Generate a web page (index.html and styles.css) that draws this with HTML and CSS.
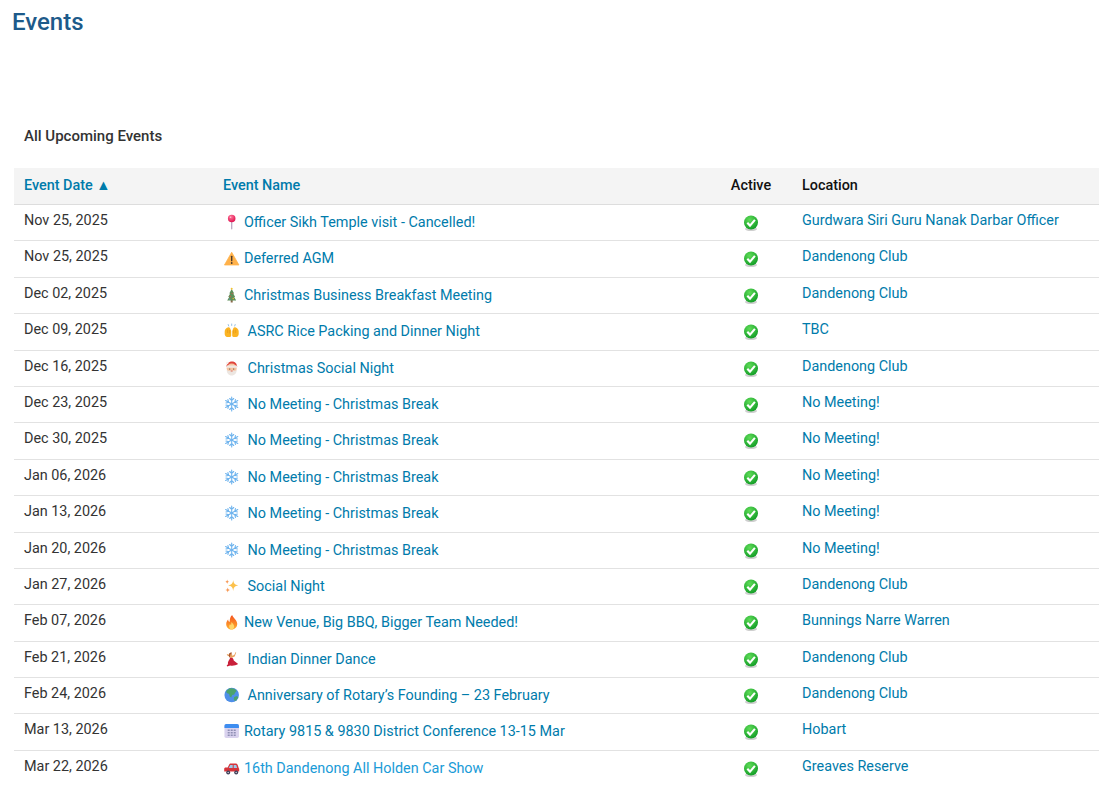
FILE: index.html
```html
<!DOCTYPE html>
<html lang="en">
<head>
<meta charset="utf-8">
<title>Events</title>
<link rel="stylesheet" href="styles.css">
</head>
<body>
<svg class="sprite" width="0" height="0" aria-hidden="true">
  <defs>
    <radialGradient id="g-check" cx="40%" cy="30%" r="75%"><stop offset="0" stop-color="#5fdc58"/><stop offset="1" stop-color="#0f9a24"/></radialGradient>
    <radialGradient id="g-pin" cx="40%" cy="30%" r="70%"><stop offset="0" stop-color="#ff7a9c"/><stop offset="1" stop-color="#e0124f"/></radialGradient>
    <linearGradient id="g-fire" x1="0" y1="1" x2="0" y2="0"><stop offset="0" stop-color="#ffb02e"/><stop offset="1" stop-color="#f4511e"/></linearGradient>
    <symbol id="e-check" viewBox="0 0 16 16"><ellipse cx="8" cy="14" rx="6" ry="2" fill="#cfcfcf"/><circle cx="8" cy="7.5" r="7" fill="url(#g-check)"/><path d="M4.3 7.8 7 10.6 11.9 4.9" fill="none" stroke="#fff" stroke-width="2.1"/></symbol>
    <symbol id="e-pin" viewBox="0 0 32 32"><rect x="14.7" y="14" width="2.6" height="17" rx="1.3" fill="#b9a9c4"/><circle cx="16" cy="9" r="7.5" fill="url(#g-pin)"/><circle cx="13.5" cy="6.5" r="1.6" fill="#ffc2d1"/></symbol>
    <symbol id="e-warn" viewBox="0 0 32 32"><path d="M16 4.5 30.5 30H1.500z" fill="#ffb14a" stroke="#ffb14a" stroke-width="1.500" stroke-linejoin="round"/><rect x="14.6" y="11.500" width="2.8" height="11" rx="1.200" fill="#4a3a2c"/><circle cx="16" cy="26" r="1.800" fill="#4a3a2c"/></symbol>
    <symbol id="e-tree" viewBox="0 0 32 32"><rect x="14" y="26" width="4" height="5" fill="#8a6a4c"/><path d="M16 4 21 13h-2l4 7h-2l4 7H7l4-7H9l4-7h-2z" fill="#5f8f5a"/><circle cx="16" cy="3.500" r="2" fill="#f2c230"/><circle cx="13" cy="19" r="1.300" fill="#e0524a"/><circle cx="19" cy="23" r="1.300" fill="#f2c230"/><circle cx="17" cy="13" r="1.200" fill="#e0524a"/><circle cx="12" cy="24" r="1.200" fill="#5aa6e0"/></symbol>
    <symbol id="e-hands" viewBox="0 0 32 32"><path d="M2 17c0-4 3-7 6-8 2-1 4 0 5 2l2 5v9c0 2-2 3-4 3H7c-3 0-5-3-5-6z" fill="#fbb423"/><path d="M30 17c0-4-3-7-6-8-2-1-4 0-5 2l-2 5v9c0 2 2 3 4 3h4c3 0 5-3 5-6z" fill="#fbb423"/><path d="M8 13v7M12 14v7M24 13v7M20 14v7" stroke="#dd8a10" stroke-width="1"/><path d="M9 3l1 3M16 2v3M23 3l-1 3" stroke="#7fb2de" stroke-width="1.600" stroke-linecap="round"/></symbol>
    <symbol id="e-santa" viewBox="0 0 32 32"><path d="M5 14C6 5 13 2 19 3c5 1 8 6 8 11z" fill="#e0433a"/><circle cx="7" cy="6" r="2.500" fill="#f4f0ec"/><circle cx="16" cy="17" r="10" fill="#f6c4a0"/><rect x="5" y="11" width="22" height="4.500" rx="2.200" fill="#efe9e4"/><path d="M6 20c3 2 6 1 10 1s7 1 10-1c0 6-4 11-10 11S6 26 6 20z" fill="#ece6e1"/><circle cx="12" cy="18" r="1.200" fill="#4a3a30"/><circle cx="20" cy="18" r="1.200" fill="#4a3a30"/><ellipse cx="16" cy="22" rx="2.500" ry="1.500" fill="#e78a78"/></symbol>
    <symbol id="e-snow" viewBox="0 0 32 32"><g stroke="#6fb4ee" stroke-width="2.200" stroke-linecap="round" fill="none"><path id="e-snow-arm" d="M16 2v28M12 5l4 4 4-4M12 27l4-4 4 4"/><path transform="rotate(60 16 16)" d="M16 2v28M12 5l4 4 4-4M12 27l4-4 4 4"/><path transform="rotate(120 16 16)" d="M16 2v28M12 5l4 4 4-4M12 27l4-4 4 4"/></g></symbol>
    <symbol id="e-spark" viewBox="0 0 32 32"><path d="M19 4c1 7 3 9 10 11-7 1-9 3-10 11-1-8-3-10-10-11 7-2 9-4 10-11z" fill="#fcc14c"/><path d="M7 3c.6 3 1.400 4 4 4.500C8.400 8 7.600 9 7 12 6.400 9 5.600 8 3 7.500 5.600 7 6.400 6 7 3z" fill="#f79a57"/><path d="M8 19c.7 3.500 1.600 4.500 5 5-3.400.6-4.300 1.500-5 5-.7-3.500-1.600-4.400-5-5 3.400-.5 4.300-1.500 5-5z" fill="#f79a57"/></symbol>
    <symbol id="e-fire" viewBox="0 0 32 32"><path d="M17 2c1 5 9 9 10 17 .6 7-5 12-11 12S5 27 5 20c0-4 2-7 4-9 0 3 1 4 3 5 0-6 1-11 5-14z" fill="url(#g-fire)"/><path d="M16 16c1 3 5 5 5 9 0 3-2 6-5 6s-5-3-5-6c0-2 1-4 2-5 0 1 1 2 2 2 0-2 0-4 1-6z" fill="#ffd76a"/></symbol>
    <symbol id="e-dance" viewBox="0 0 32 32"><path d="M14 12c4 1 6 4 6 7l9 7c-5 3-11 4-16 3l-6 2-1-2 3-3c-2-3 2-8 5-14z" fill="#c9203a"/><path d="M14 13 6 8l1-2 8 4 6-2 3-6 1 1-3 8-7 3z" fill="#e8a260"/><circle cx="14" cy="8" r="3.200" fill="#e8a260"/><path d="M10 9c0-5 4-7 7-5-1 1-4 2-4 5l-1 5z" fill="#a9552a"/></symbol>
    <symbol id="e-globe" viewBox="0 0 32 32"><circle cx="16" cy="16" r="14.500" fill="#4f8fe8"/><path d="M11 3c5-1 12 0 15 5l-3 3-2 4-4 1-2 5-3-2-1-5-5-2-1-4zM21 20l6-2 2 3-4 6-3 1-2-4z" fill="#4ca36c"/></symbol>
    <symbol id="e-cal" viewBox="0 0 32 32"><rect x="1.500" y="2" width="29" height="28" rx="3.500" fill="#d9d2ee"/><path d="M1.500 10V5.500A3.500 3.500 0 0 1 5 2h22a3.500 3.500 0 0 1 3.500 3.500V10z" fill="#3d8df0"/><g fill="#8f8fb4"><rect x="8" y="13" width="4" height="3"/><rect x="14" y="13" width="4" height="3"/><rect x="20" y="13" width="4" height="3"/><rect x="8" y="18" width="4" height="3"/><rect x="14" y="18" width="4" height="3"/><rect x="20" y="18" width="4" height="3"/><rect x="8" y="23" width="4" height="3"/><rect x="14" y="23" width="4" height="3"/><rect x="20" y="23" width="4" height="3"/></g></symbol>
    <symbol id="e-car" viewBox="0 0 32 32"><path d="M1 23v-5c0-2 1-3 3-3h4l3-6c.5-1 1.500-2 3-2h10c2 0 3 1 4 3l2 6c1 1 1 2 1 3v4z" fill="#d5333a"/><path d="M13 10h5v6h-8zM20 10h5l2 6h-7z" fill="#9cc8e8"/><circle cx="9" cy="25" r="4" fill="#3d3d55"/><circle cx="25" cy="25" r="4" fill="#3d3d55"/><circle cx="9" cy="25" r="1.600" fill="#c6c6d2"/><circle cx="25" cy="25" r="1.600" fill="#c6c6d2"/></symbol>
  </defs>
</svg>
<h1 class="page-title">Events</h1>
<section class="events">
  <h2 class="events-heading">All Upcoming Events</h2>
  <table class="events-table">
    <thead>
      <tr>
        <th class="col-date"><a href="#">Event Date ▲</a></th>
        <th class="col-name"><a href="#">Event Name</a></th>
        <th class="col-active">Active</th>
        <th class="col-location">Location</th>
      </tr>
    </thead>
    <tbody>
      <tr><td>Nov 25, 2025</td><td class="name"><a href="#"><svg class="emoji"><use href="#e-pin"/></svg> Officer Sikh Temple visit - Cancelled!</a></td><td class="active"><svg class="check"><use href="#e-check"/></svg></td><td><a href="#">Gurdwara Siri Guru Nanak Darbar Officer</a></td></tr>
      <tr><td>Nov 25, 2025</td><td class="name"><a href="#"><svg class="emoji"><use href="#e-warn"/></svg> Deferred AGM</a></td><td class="active"><svg class="check"><use href="#e-check"/></svg></td><td><a href="#">Dandenong Club</a></td></tr>
      <tr><td>Dec 02, 2025</td><td class="name"><a href="#"><svg class="emoji"><use href="#e-tree"/></svg> Christmas Business Breakfast Meeting</a></td><td class="active"><svg class="check"><use href="#e-check"/></svg></td><td><a href="#">Dandenong Club</a></td></tr>
      <tr><td>Dec 09, 2025</td><td class="name"><a href="#"><svg class="emoji"><use href="#e-hands"/></svg>&nbsp; ASRC Rice Packing and Dinner Night</a></td><td class="active"><svg class="check"><use href="#e-check"/></svg></td><td><a href="#">TBC</a></td></tr>
      <tr><td>Dec 16, 2025</td><td class="name"><a href="#"><svg class="emoji"><use href="#e-santa"/></svg>&nbsp; Christmas Social Night</a></td><td class="active"><svg class="check"><use href="#e-check"/></svg></td><td><a href="#">Dandenong Club</a></td></tr>
      <tr><td>Dec 23, 2025</td><td class="name"><a href="#"><svg class="emoji"><use href="#e-snow"/></svg>&nbsp; No Meeting - Christmas Break</a></td><td class="active"><svg class="check"><use href="#e-check"/></svg></td><td><a href="#">No Meeting!</a></td></tr>
      <tr><td>Dec 30, 2025</td><td class="name"><a href="#"><svg class="emoji"><use href="#e-snow"/></svg>&nbsp; No Meeting - Christmas Break</a></td><td class="active"><svg class="check"><use href="#e-check"/></svg></td><td><a href="#">No Meeting!</a></td></tr>
      <tr><td>Jan 06, 2026</td><td class="name"><a href="#"><svg class="emoji"><use href="#e-snow"/></svg>&nbsp; No Meeting - Christmas Break</a></td><td class="active"><svg class="check"><use href="#e-check"/></svg></td><td><a href="#">No Meeting!</a></td></tr>
      <tr><td>Jan 13, 2026</td><td class="name"><a href="#"><svg class="emoji"><use href="#e-snow"/></svg>&nbsp; No Meeting - Christmas Break</a></td><td class="active"><svg class="check"><use href="#e-check"/></svg></td><td><a href="#">No Meeting!</a></td></tr>
      <tr><td>Jan 20, 2026</td><td class="name"><a href="#"><svg class="emoji"><use href="#e-snow"/></svg>&nbsp; No Meeting - Christmas Break</a></td><td class="active"><svg class="check"><use href="#e-check"/></svg></td><td><a href="#">No Meeting!</a></td></tr>
      <tr><td>Jan 27, 2026</td><td class="name"><a href="#"><svg class="emoji"><use href="#e-spark"/></svg>&nbsp; Social Night</a></td><td class="active"><svg class="check"><use href="#e-check"/></svg></td><td><a href="#">Dandenong Club</a></td></tr>
      <tr><td>Feb 07, 2026</td><td class="name"><a href="#"><svg class="emoji"><use href="#e-fire"/></svg> New Venue, Big BBQ, Bigger Team Needed!</a></td><td class="active"><svg class="check"><use href="#e-check"/></svg></td><td><a href="#">Bunnings Narre Warren</a></td></tr>
      <tr><td>Feb 21, 2026</td><td class="name"><a href="#"><svg class="emoji"><use href="#e-dance"/></svg>&nbsp; Indian Dinner Dance</a></td><td class="active"><svg class="check"><use href="#e-check"/></svg></td><td><a href="#">Dandenong Club</a></td></tr>
      <tr><td>Feb 24, 2026</td><td class="name"><a href="#"><svg class="emoji"><use href="#e-globe"/></svg>&nbsp; Anniversary of Rotary’s Founding – 23 February</a></td><td class="active"><svg class="check"><use href="#e-check"/></svg></td><td><a href="#">Dandenong Club</a></td></tr>
      <tr><td>Mar 13, 2026</td><td class="name"><a href="#"><svg class="emoji"><use href="#e-cal"/></svg> Rotary 9815 &amp; 9830 District Conference 13-15 Mar</a></td><td class="active"><svg class="check"><use href="#e-check"/></svg></td><td><a href="#">Hobart</a></td></tr>
      <tr><td>Mar 22, 2026</td><td class="name"><a class="hover" href="#"><svg class="emoji"><use href="#e-car"/></svg> 16th Dandenong All Holden Car Show</a></td><td class="active"><svg class="check"><use href="#e-check"/></svg></td><td><a href="#">Greaves Reserve</a></td></tr>
    </tbody>
  </table>
</section>
</body>
</html>
```

FILE: styles.css
```css
html, body {
  margin: 0;
  padding: 0;
  background: #fff;
}
body {
  font-family: Roboto, "Liberation Sans", sans-serif;
  font-size: 14.4px;
  line-height: 1.4;
  color: #333;
  height: 785px;
  overflow: hidden;
}
.sprite {
  position: absolute;
}
.page-title {
  margin: 0;
  padding: 7px 12px 0;
  font-size: 24px;
  line-height: 30px;
  font-weight: 500;
  color: #1d5a8a;
}
.events {
  padding: 88px 0 0 14px;
}
.events-heading {
  margin: 0;
  padding: 0 10px;
  font-size: 15px;
  line-height: 22px;
  font-weight: 500;
  color: #333;
}
.events-table {
  width: 100%;
  margin-top: 21px;
  border-collapse: collapse;
  table-layout: fixed;
}
.events-table a {
  color: #007bab;
  text-decoration: none;
}
.events-table a.hover {
  color: #1a9bd7;
}
th {
  height: 36px;
  padding: 0 10px;
  background: #f4f4f4;
  border-bottom: 1px solid #ddd;
  text-align: left;
  font-weight: 500;
  color: #111;
}
td {
  height: 36.4px;
  padding: 6px 10px 0;
  box-sizing: border-box;
  border-bottom: 1px solid #e2e2e2;
  vertical-align: top;
}
td.name {
  padding-top: 8px;
}
.col-date { width: 199px; box-sizing: border-box; }
.col-name { width: 497px; box-sizing: border-box; }
.col-active { width: 82px; box-sizing: border-box; text-align: center; }
td.active {
  padding: 10px 0 0;
  text-align: center;
  line-height: 0;
}
.emoji {
  display: inline-block;
  width: 17.4px;
  height: 16px;
  vertical-align: -3px;
}
.check {
  display: inline-block;
  width: 16px;
  height: 16px;
}
```
